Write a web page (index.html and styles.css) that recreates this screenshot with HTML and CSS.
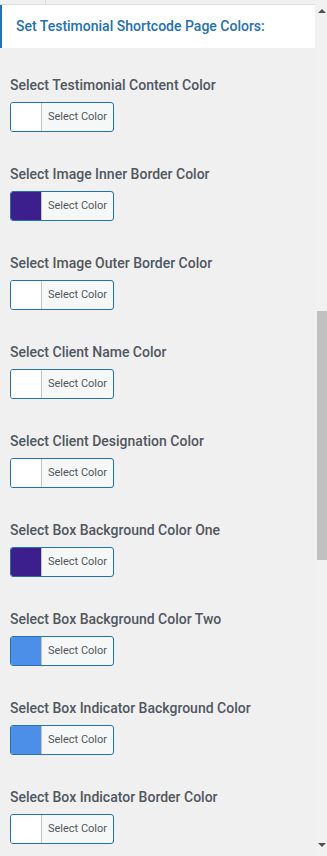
FILE: index.html
```html
<!DOCTYPE html>
<html lang="en">
<head>
  <meta charset="UTF-8" />
  <meta name="viewport" content="width=device-width, initial-scale=1.0" />
  <title>Testimonial Colors</title>
  <link rel="stylesheet" href="styles.css">
</head>
<body>
  <div class="page">
    <div class="main">
      <div class="top-strip"><span class="tab"></span></div>
      <div class="section-title">Set Testimonial Shortcode Page Colors:</div>

      <div class="fields">
        <div class="field">
          <label>Select Testimonial Content Color</label>
          <button class="color-btn"><span class="swatch swatch-white"></span><span class="btn-text">Select Color</span></button>
        </div>
        <div class="field">
          <label>Select Image Inner Border Color</label>
          <button class="color-btn"><span class="swatch swatch-purple"></span><span class="btn-text">Select Color</span></button>
        </div>
        <div class="field">
          <label>Select Image Outer Border Color</label>
          <button class="color-btn"><span class="swatch swatch-white"></span><span class="btn-text">Select Color</span></button>
        </div>
        <div class="field">
          <label>Select Client Name Color</label>
          <button class="color-btn"><span class="swatch swatch-white"></span><span class="btn-text">Select Color</span></button>
        </div>
        <div class="field">
          <label>Select Client Designation Color</label>
          <button class="color-btn"><span class="swatch swatch-white"></span><span class="btn-text">Select Color</span></button>
        </div>
        <div class="field">
          <label>Select Box Background Color One</label>
          <button class="color-btn"><span class="swatch swatch-purple"></span><span class="btn-text">Select Color</span></button>
        </div>
        <div class="field">
          <label>Select Box Background Color Two</label>
          <button class="color-btn"><span class="swatch swatch-blue"></span><span class="btn-text">Select Color</span></button>
        </div>
        <div class="field">
          <label>Select Box Indicator Background Color</label>
          <button class="color-btn"><span class="swatch swatch-blue"></span><span class="btn-text">Select Color</span></button>
        </div>
        <div class="field">
          <label>Select Box Indicator Border Color</label>
          <button class="color-btn"><span class="swatch swatch-white"></span><span class="btn-text">Select Color</span></button>
        </div>
      </div>
    </div>

    <div class="scrollbar">
      <div class="arrow arrow-up"></div>
      <div class="track">
        <div class="thumb"></div>
      </div>
      <div class="arrow arrow-down"></div>
    </div>
  </div>
</body>
</html>
```

FILE: styles.css
```css
html, body {
  margin: 0;
  padding: 0;
  height: 856px;
  overflow: hidden;
}
body {
  font-family: Roboto, "Noto Sans", Arial, sans-serif;
  background: #f0f0f1;
}
.page {
  display: flex;
  height: 856px;
}
.main {
  flex: 1;
  overflow: hidden;
}
.top-strip {
  height: 4px;
  background: #f0f0f1;
  border-bottom: 1px solid #dcdcde;
}
.tab {
  display: block;
  width: 45px;
  height: 4px;
  border-right: 1px solid #dcdcde;
}
.section-title {
  height: 43px;
  line-height: 42px;
  background: #fff;
  border-left: 2px solid #2271b1;
  padding-left: 14px;
  color: #2271b1;
  font-size: 14px;
  font-weight: 500;
}
.fields {
  padding: 27px 10px 0;
}
.field {
  margin-bottom: 32px;
}
.field label {
  display: block;
  font-size: 14px;
  line-height: 20px;
  font-weight: 500;
  color: #50575e;
  margin-bottom: 7px;
}
.color-btn {
  display: flex;
  align-items: stretch;
  width: 104px;
  height: 30px;
  padding: 0;
  border: 1px solid #2271b1;
  border-radius: 3px;
  background: #f6f7f7;
  overflow: hidden;
  font-family: inherit;
}
.swatch {
  width: 30px;
  border-right: 1px solid #c3c4c7;
}
.swatch-white { background: #fff; }
.swatch-purple { background: #3c1e8c; }
.swatch-blue { background: #4b8fe8; }
.btn-text {
  flex: 1;
  font-size: 11px;
  line-height: 28px;
  color: #50575e;
  text-align: center;
}
.scrollbar {
  width: 12px;
  display: flex;
  flex-direction: column;
  background: #f1f1f1;
}
.arrow {
  height: 12px;
  position: relative;
}
.arrow::after {
  content: "";
  position: absolute;
  left: 3px;
  border-left: 4px solid transparent;
  border-right: 4px solid transparent;
}
.arrow-up::after {
  top: 9px;
  border-bottom: 4px solid #505050;
}
.arrow-down::after {
  top: -1px;
  border-top: 4px solid #505050;
}
.track {
  flex: 1;
  padding-top: 299px;
  padding-left: 2px;
}
.thumb {
  height: 249px;
  background: #c1c1c1;
}
```
